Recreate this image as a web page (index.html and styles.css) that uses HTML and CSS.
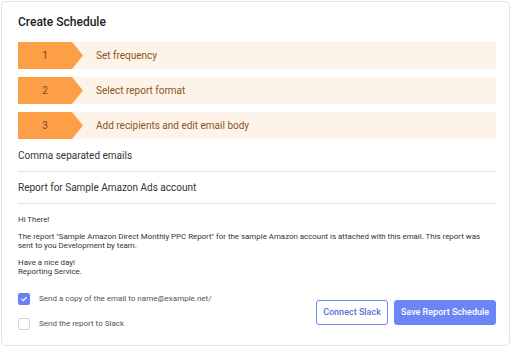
FILE: index.html
```html
<!DOCTYPE html>
<html>
<head>
<meta charset="utf-8">
<link rel="stylesheet" href="styles.css">
</head>
<body>
<div class="card">
  <h1 class="title">Create Schedule</h1>
  <div class="steps">
    <div class="step"><div class="step-num">1</div><div class="step-label">Set frequency</div></div>
    <div class="step"><div class="step-num">2</div><div class="step-label">Select report format</div></div>
    <div class="step"><div class="step-num">3</div><div class="step-label">Add recipients and edit email body</div></div>
  </div>
  <div class="field field-first">Comma separated emails</div>
  <div class="field">Report for Sample Amazon Ads account</div>
  <div class="email-body">
    <p>Hi There!</p>
    <p>The report "Sample Amazon Direct Monthly PPC Report" for the sample Amazon account is attached with this email. This report was sent to you Development by team.</p>
    <p>Have a nice day!<br>Reporting Service.</p>
  </div>
  <div class="footer">
    <div class="checks">
      <label class="check"><span class="box box-on"><svg viewBox="0 0 12 12" width="12" height="12"><path d="M3.2 6.2 L5.1 8 L8.8 4.2" fill="none" stroke="#fff" stroke-width="1.3" stroke-linecap="round" stroke-linejoin="round"/></svg></span>Send a copy of the email to name@example.net/</label>
      <label class="check"><span class="box"></span>Send the report to Slack</label>
    </div>
    <div class="buttons">
      <button class="btn btn-outline">Connect Slack</button>
      <button class="btn btn-primary">Save Report Schedule</button>
    </div>
  </div>
</div>
</body>
</html>
```
FILE: styles.css
```css
* { box-sizing: border-box; }
html, body { margin: 0; padding: 0; background: #fff; }
body { font-family: Roboto, "Liberation Sans", Arial, sans-serif; }
.card {
  margin: 1px 0 0 1px;
  width: 509px;
  height: 345px;
  border: 1px solid #e2e2e2;
  border-radius: 5px;
  padding: 11px 13px 0 16px;
  display: flex;
  flex-direction: column;
}
.title {
  margin: 0;
  font-size: 12px;
  line-height: 18px;
  font-weight: 500;
  color: #222;
}
.steps {
  margin-top: 11px;
  display: flex;
  flex-direction: column;
  gap: 8px;
}
.step {
  height: 27px;
  background: #fef3e8;
  display: flex;
  align-items: center;
}
.step-num {
  width: 65px;
  height: 27px;
  background: #fd9f47;
  clip-path: polygon(0 0, 54px 0, 65px 50%, 54px 100%, 0 100%);
  padding-right: 11px;
  display: flex;
  align-items: center;
  justify-content: center;
  font-size: 10px;
  color: #7a4515;
}
.step-label {
  margin-left: 13px;
  font-size: 10px;
  color: #8a5522;
}
.field {
  font-size: 10px;
  line-height: 14px;
  color: #333;
  padding: 9px 0 8px;
  border-bottom: 1px solid #e3e3e3;
}
.field-first { padding-top: 10px; }
.email-body {
  padding-top: 11px;
  font-size: 7.9px;
  line-height: 9.5px;
  color: #333;
}
.email-body p { margin: 0 0 7px; }
.footer {
  margin-top: 9px;
  display: flex;
  align-items: center;
  justify-content: space-between;
}
.checks {
  display: flex;
  flex-direction: column;
  gap: 13px;
}
.check {
  display: flex;
  align-items: center;
  gap: 9px;
  font-size: 8px;
  color: #555;
  height: 12px;
}
.box {
  width: 12px;
  height: 12px;
  border: 1px solid #d4d4d4;
  border-radius: 2px;
  background: #fff;
  display: flex;
  align-items: center;
  justify-content: center;
}
.box-on {
  background: #6b81f3;
  border-color: #6b81f3;
}
.box svg { display: block; }
.buttons {
  display: flex;
  gap: 6px;
  margin-top: 2px;
}
.btn {
  font-family: Roboto, "Liberation Sans", Arial, sans-serif;
  font-size: 9px;
  font-weight: 500;
  height: 25px;
  border-radius: 3px;
  padding: 0;
  white-space: nowrap;
  cursor: pointer;
}
.btn-outline {
  width: 72px;
  background: #fff;
  border: 1px solid #7189f2;
  color: #5b70d8;
}
.btn-primary {
  width: 102px;
  background: #6b84f6;
  border: 1px solid #6b84f6;
  color: #fff;
}
```
